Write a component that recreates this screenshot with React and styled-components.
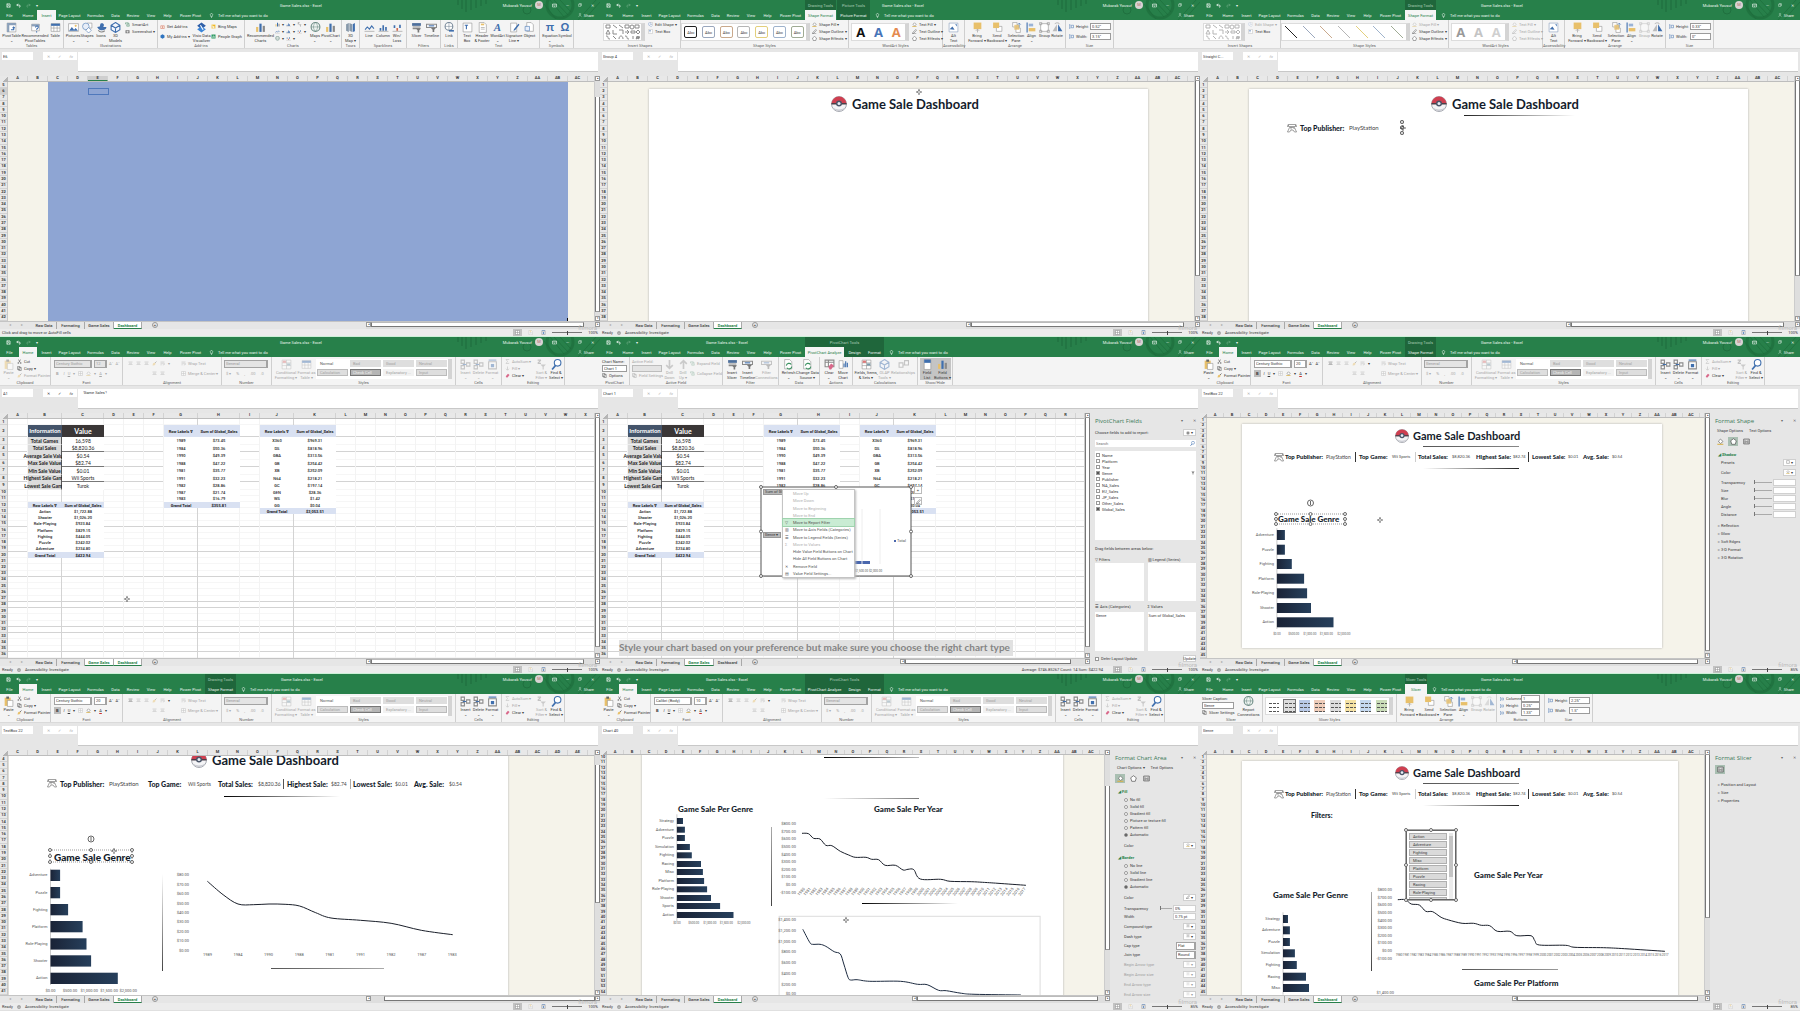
import React from "react";
import styled, { createGlobalStyle, css } from "styled-components";

const Global = createGlobalStyle`
  *, *::before, *::after { box-sizing: border-box; }
  body { margin: 0; background: #e6e6e6; font-family: Roboto, "Liberation Sans", sans-serif; }
  button, input, select { font: inherit; color: inherit; margin: 0; padding: 0; border: 0; background: none; border-radius: 0; min-width: 0; }
  table { border-spacing: 0; }
`;

const green = "#27804a";
const darkGreen = "#1f663b";
const ink = "#3a3a3a";
const blue = "#3f6fae";
const gold = "#e8c06a";

/* ---------- window frame ---------- */
const Wall = styled.main`
  display: grid;
  grid-template-columns: repeat(3, minmax(0, 1fr));
  grid-template-rows: repeat(3, minmax(0, 1fr));
  height: 100vh;
`;
const Window = styled.section`
  display: flex;
  flex-direction: column;
  overflow: hidden;
  min-width: 0;
  min-height: 0;
  background: #e6e6e6;
  color: ${ink};
  font-size: 4px;
  line-height: 5px;
  white-space: nowrap;
`;
const Header = styled.header`
  position: relative;
  display: flex;
  height: 20px;
  flex: none;
  background: ${green};
  color: #eaf5ee;
`;
const Decor = styled.svg`
  position: absolute;
  right: 0;
  top: 0;
  width: 150px;
  height: 20px;
`;
const HeadBlock = styled.div`
  position: relative;
  display: flex;
  flex-direction: column;
  flex: ${(p) => (p.$grow ? "1 1 0" : "none")};
  min-width: 0;
  background: ${(p) => (p.$ctx ? darkGreen : "transparent")};
  border-right: ${(p) => (p.$ctx ? "1px solid #27804a" : "0")};
`;
const HeadRow = styled.div`
  display: flex;
  align-items: center;
  height: 10px;
  justify-content: ${(p) => (p.$center ? "center" : "flex-start")};
  color: ${(p) => (p.$soft ? "#a9cdb6" : "inherit")};
`;
const Quick = styled.div`
  display: flex;
  align-items: center;
  gap: 5px;
  padding-left: 6px;
  width: 106px;
`;
const TitleText = styled.h2`
  margin: 0;
  font-size: 4px;
  font-weight: 400;
  flex: none;
  padding-left: ${(p) => p.$pad || 0}px;
`;
const Push = styled.span`
  margin-left: auto;
  display: flex;
  align-items: center;
  gap: ${(p) => (p.$gap === undefined ? 2 : p.$gap)}px;
  padding-right: 6px;
`;
const User = styled.span`
  display: flex;
  align-items: center;
  gap: 3px;
`;
const Avatar = styled.span`
  width: 8px;
  height: 8px;
  border-radius: 50%;
  background: #d9d3d3;
  color: #b26a6a;
  text-align: center;
  line-height: 8px;
`;
const Tab = styled.button`
  width: ${(p) => p.$w}px;
  height: 10px;
  flex: none;
  text-align: center;
  ${(p) => p.$on && css`background: #f5f5f5; color: ${green};`}
`;
const Hint = styled.span`
  display: flex;
  align-items: center;
  gap: 4px;
  padding-left: 4px;
`;

const baseTabs = [["File", 19], ["Home", 18], ["Insert", 19], ["Page Layout", 27], ["Formulas", 25], ["Data", 15], ["Review", 20], ["View", 16], ["Help", 17], ["Power Pivot", 29]];

function TitleBar({ active, ctx = [], early }) {
  const used = 205 + ctx.reduce((s, c) => s + c.tabs.reduce((a, t) => a + t[1], 0), 0);
  return (
    <Header>
      <Decor viewBox="0 0 150 20" fill="none" stroke="#1d6a3b" strokeWidth="1">
        <path d="M8 0v5M12 0v9M16 0v12M21 0v10M26 0v8M31 0v6M36 0v4" strokeWidth="2" opacity=".5" />
        <circle cx="77" cy="10" r="4" opacity=".7" />
        <circle cx="110" cy="5" r="13" strokeWidth="3" opacity=".6" />
        <path d="M100 0l14 17M104 0l14 15M110 0l11 12M94 4l12 15M128 20l18-20M134 20l16-18" opacity=".6" />
      </Decor>
      <HeadBlock>
        <HeadRow>
          <Quick>
            <Icon k="save" s={5} /><Icon k="undo" s={5} /><Icon k="redo" s={5} /><span>▾</span>
          </Quick>
          {early && <TitleText>Game Sales.xlsx - Excel</TitleText>}
        </HeadRow>
        <HeadRow as="nav">
          {baseTabs.map(([t, w]) => <Tab key={t} $w={w} $on={t === active}>{t}</Tab>)}
        </HeadRow>
      </HeadBlock>
      {ctx.map((c) => (
        <HeadBlock key={c.name} $ctx>
          <HeadRow $center $soft>{c.name}</HeadRow>
          <HeadRow>{c.tabs.map(([t, w]) => <Tab key={t} $w={w} $on={t === active}>{t}</Tab>)}</HeadRow>
        </HeadBlock>
      ))}
      <HeadBlock $grow>
        <HeadRow>
          {!early && <TitleText $pad={280 - used}>Game Sales.xlsx - Excel</TitleText>}
          <Push $gap={9}>
            <User>Mubarak Yousuf<Avatar>M</Avatar></User>
            <Icon k="display" s={5} /><span>—</span><Icon k="square" s={4} /><span>✕</span>
          </Push>
        </HeadRow>
        <HeadRow>
          <Hint><Icon k="bulb" s={5} />Tell me what you want to do</Hint>
          <Push><Icon k="person" s={4} />Share</Push>
        </HeadRow>
      </HeadBlock>
    </Header>
  );
}

/* ---------- icons ---------- */
const Svg = styled.svg`
  width: ${(p) => p.$s}px;
  height: ${(p) => p.$s}px;
  flex: none;
  opacity: ${(p) => (p.$dim ? 0.45 : 1)};
`;
const G = "#8a8a8a";
const glyphs = {
  save: <path d="M3 3h12l2 2v12H3zM6 3v5h7V3M6 17v-6h8v6" fill="none" stroke="#fff" strokeWidth="2" />,
  undo: <path d="M8 3L3 8l5 5M3 8h9a4 4 0 010 9" fill="none" stroke="#fff" strokeWidth="3" />,
  redo: <path d="M12 3l5 5-5 5M17 8H8a4 4 0 000 9" fill="none" stroke="#7db492" strokeWidth="2" />,
  display: <path d="M2 4h16v12H2zM2 8h16M10 15v-4" fill="none" stroke="#fff" strokeWidth="2" />,
  square: <path d="M3 6h11v11H3zM7 6V3h10v10h-3" fill="none" stroke="#fff" strokeWidth="2" />,
  box: <path d="M3 3h14v14H3z" fill="#fff" stroke="#666" strokeWidth="2" />,
  bulb: <path d="M10 2a5 5 0 013 9v3H7v-3a5 5 0 013-9zM8 18h4" fill="none" stroke="#fff" strokeWidth="2" />,
  person: <path d="M10 9a4 4 0 100-8 4 4 0 000 8zM3 19c0-9 14-9 14 0" fill="none" stroke="#cfe6d8" strokeWidth="2" />,
  table: <><path d="M2 3h16v14H2z" fill="#fff" stroke={G} /><path d="M2 3h16v4H2z" fill={blue} /><path d="M2 11h16M7 7v10M13 7v10" stroke={G} /></>,
  pivot: <><path d="M2 2h16v16H2z" fill="#fff" stroke={G} /><path d="M2 2h16v4H2zM2 2h4v16H2z" fill="#8ba0ba" /><path d="M9 14h5V9M12 11l2-2 2 2" stroke={blue} fill="none" strokeWidth="2" /></>,
  recpivot: <><path d="M3 4h14v12H3z" fill="#fff" stroke={G} /><path d="M3 4h14v4H3z" fill="#8ba0ba" /><path d="M10 10c0-4 6-3 5 0-1 2-3 2-3 4M12 17v2" stroke={blue} fill="none" strokeWidth="2" /></>,
  picture: <><path d="M1 3h18v14H1z" fill="#fff" stroke={G} /><path d="M2 16l5-7 4 5 3-3 4 5z" fill={blue} /><circle cx="14" cy="7" r="2" fill={gold} /></>,
  shapes: <><path d="M9 2h9v9H9z" fill="#fff" stroke={G} /><circle cx="7" cy="8" r="6" fill="#e8eef8" stroke={blue} /><path d="M12 10l5 5-5 5-5-5z" fill="#fff" stroke={blue} /></>,
  duck: <><path d="M8 3c6-3 8 3 5 6h6c0 6-10 8-14 4l-3-4 5-1z" fill={blue} /><path d="M4 15c3 4 8 4 12 1" stroke={G} fill="none" strokeWidth="2" /></>,
  cube: <path d="M10 1l8 5v8l-8 5-8-5V6zM2 6l8 5 8-5M10 11v8" fill="#f4f8ff" stroke={blue} strokeWidth="2" />,
  smart: <path d="M2 3h10v5H2zM7 12h10v5H7zM12 5h4v7" fill="#fff" stroke="#4c8b69" strokeWidth="2" />,
  shot: <><path d="M2 5h16v12H2z" fill="#777" /><circle cx="10" cy="11" r="4" fill="#ddd" /></>,
  store: <><path d="M3 7h14v11H3z" fill="#fff" stroke="#d2684d" strokeWidth="2" /><path d="M10 9v7M7 12h7" stroke="#d2684d" strokeWidth="2" /></>,
  hex: <path d="M10 1l8 5v8l-8 5-8-5V6z" fill="#2f74c0" />,
  visio: <><path d="M10 1l8 6-8 6-8-6z" fill="#2e5fa8" /><path d="M10 8l8 5-8 6-8-6z" fill="#3c86d8" /><path d="M8 6l5 8" stroke="#fff" strokeWidth="2" /></>,
  bing: <path d="M2 2h16v16H2zM6 5v9l4 2 5-4-5-3" fill="#efb71f" stroke="#fff" />,
  people: <><path d="M2 2h16v16H2z" fill="#2f9a63" /><path d="M6 15v-5M10 15V6M14 15V9" stroke="#fff" strokeWidth="2" /></>,
  chart: <><path d="M2 9h4v9H2z" fill={gold} /><path d="M8 3h4v15H8z" fill={blue} /><path d="M14 7h4v11h-4z" fill="#8a8a8a" /></>,
  globe: <><circle cx="10" cy="9" r="8" fill="#eef4f1" stroke="#6d8c85" strokeWidth="2" /><path d="M2 9h16M10 1c-5 5-5 11 0 16M10 1c5 5 5 11 0 16" stroke="#6d8c85" fill="none" /></>,
  map3d: <><path d="M2 4l5-2v16l-5-2zM8 2l5 2v14l-5-2z" fill="#89a" /><path d="M14 4l4-2v15l-4 1z" fill={blue} /></>,
  spark: <><path d="M2 14l4-5 4 4 4-6 4 5" stroke={blue} fill="none" strokeWidth="2" /><path d="M1 17h18" stroke={G} /></>,
  bars: <><path d="M3 11h3v5H3zM8 6h3v10H8zM13 9h3v7h-3z" fill={blue} /><path d="M1 17h18" stroke={G} /></>,
  winloss: <><path d="M3 6h3v5H3zM13 5h3v6h-3z" fill={blue} /><path d="M8 11h3v5H8z" fill="#d2684d" /><path d="M1 17h18" stroke={G} /></>,
  slicer: <><path d="M2 2h16v5H2z" fill="#4d6f9b" /><path d="M3 9h14M3 12h14" stroke={G} strokeWidth="2" /><path d="M9 12h9l-3 3v4h-3v-4z" fill="#777" /></>,
  timeline: <><path d="M1 4h18v6H1z" fill="#fff" stroke={G} strokeWidth="2" /><path d="M5 7h10" stroke={blue} strokeWidth="2" /><path d="M9 11h9l-3 3v4h-3v-4z" fill="#777" /></>,
  textbox: <><path d="M2 2h16v16H2z" fill="#fff" stroke={G} /><path d="M5 6h6M8 6v7" stroke={blue} strokeWidth="2" /></>,
  doc: <><path d="M4 1h9l4 4v14H4z" fill="#fff" stroke={G} /><path d="M7 3h6v3H7z" fill={gold} /><path d="M7 10h7M7 13h7" stroke={G} /></>,
  sign: <><path d="M3 2h11v16H3z" fill="#fff" stroke={G} /><path d="M17 3l-8 10-1 3 3-1 8-10z" fill={blue} /></>,
  object: <><path d="M5 1h8l4 4v12H5z" fill="#fff" stroke={G} /><path d="M2 8h8v8H2z" fill="#e7eefb" stroke={blue} /></>,
  alt: <><path d="M2 2h16v16H2z" fill="#fff" stroke="#7d95b5" /><path d="M3 13l5-5 4 6zM13 4h3v4" fill={blue} /></>,
  fwd: <><path d="M3 1h14v12H3z" fill={gold} /><path d="M10 19v-5M7 16l3-3 3 3" stroke={G} fill="none" /></>,
  back: <><path d="M8 8h10v9H8z" fill="#fff" stroke={G} /><path d="M2 1h11v10H2z" fill={gold} /></>,
  panes: <><path d="M3 1h8v8H3zM9 11h8v8H9z" fill="#fff" stroke={G} /><path d="M6 5h9v9H6z" fill={gold} opacity=".8" /><path d="M15 2v8M12 5l3-3 3 3" stroke={blue} fill="none" /></>,
  align: <><path d="M2 1v18" stroke={blue} strokeWidth="2" /><path d="M5 3h8v5H5z" fill="#9ab3d6" /><path d="M5 11h12v6H5z" fill={gold} /></>,
  group: <path d="M3 3h14v14H3zM1 1h4v4H1zM15 1h4v4h-4zM15 15h4v4h-4zM1 15h4v4H1z" fill="#fff" stroke={G} />,
  rotate: <><path d="M9 4v13H1z" fill="#bbb" /><path d="M11 17V4l8 13z" fill={blue} /><path d="M5 3c5-3 8-1 9 1" stroke={G} fill="none" /></>,
  paste: <><path d="M3 3h11v15H3z" fill={gold} /><path d="M6 1h5v4H6z" fill="#666" /><path d="M8 8h10v11H8z" fill="#fff" stroke={G} /></>,
  cut: <path d="M6 2l6 11M14 2L8 13M5 18a2 2 0 110-4 2 2 0 010 4zM15 18a2 2 0 110-4 2 2 0 010 4z" stroke="#444" fill="none" strokeWidth="2" />,
  copy: <path d="M2 2h10v12H2zM7 6h10v12H7z" fill="#fff" stroke="#555" strokeWidth="2" />,
  brush: <><path d="M12 8l6-6" stroke="#555" strokeWidth="3" /><path d="M4 10l6-4 5 5-5 6-8 1z" fill={gold} /></>,
  lines: <path d="M2 4h16M4 9h12M2 14h16" stroke="#777" strokeWidth="2" />,
  wrap: <path d="M2 4h16M2 9h13a3 3 0 010 6h-4M2 15h5" stroke="#777" strokeWidth="2" fill="none" />,
  cell: <path d="M2 2h16v16H2zM2 10h16M10 2v16" fill="#fff" stroke={G} strokeWidth="2" />,
  cond: <><path d="M2 2h16v16H2zM2 7h16M2 12h16M10 2v16" fill="#fff" stroke={G} /><path d="M3 3h6v4H3z" fill="#d77" /><path d="M11 8h6v4h-6z" fill="#79a" /></>,
  bucket: <><path d="M4 9l6-6 7 7-7 6z" fill="#fff" stroke="#666" strokeWidth="2" /><path d="M1 18h17" stroke="#d9b24a" strokeWidth="3" /></>,
  sum: <path d="M15 4V2H4l6 8-6 8h11v-3" stroke="#777" fill="none" strokeWidth="2" />,
  down: <path d="M10 2v14M4 11l6 6 6-6" stroke="#999" fill="none" strokeWidth="3" />,
  up: <path d="M10 18V4M4 9l6-6 6 6" stroke="#999" fill="none" strokeWidth="3" />,
  eraser: <path d="M3 13L12 3l6 5-8 10H6z" fill="#d9688a" />,
  clear: <><path d="M2 2h16v12H2zM2 6h16M8 2v12" fill="#fff" stroke={G} strokeWidth="2" /><path d="M8 14l5-6 5 4-5 7h-3z" fill="#d9688a" /></>,
  sort: <><path d="M3 2h6M3 8h6M9 2L3 8" stroke="#888" fill="none" strokeWidth="2" /><path d="M8 10h10l-4 4v5h-2v-5z" fill="#999" /></>,
  find: <><circle cx="12" cy="7" r="6" fill="#fff" stroke={blue} strokeWidth="2" /><path d="M8 12l-6 7" stroke={blue} strokeWidth="3" /></>,
  ins: <><path d="M2 2h6v6H2zM2 12h6v6H2zM12 7h6v6h-6z" fill="#fff" stroke={G} strokeWidth="2" /><path d="M11 10H5" stroke={blue} strokeWidth="2" /></>,
  fmt: <><path d="M3 5h14v13H3z" fill="#fff" stroke={G} strokeWidth="2" /><path d="M7 9h6v6H7z" fill={blue} /><path d="M3 2h14" stroke={blue} strokeWidth="2" /></>,
  refresh: <><path d="M3 1h9l4 4v13H3z" fill="#fff" stroke={G} /><path d="M6 12a5 5 0 019-2M16 14a5 5 0 01-9 2" stroke="#3a9160" fill="none" strokeWidth="2" /></>,
  move: <><path d="M2 3h7v14H2z" fill="#fff" stroke={G} /><path d="M11 15V8M14 15V4M17 15V7" stroke={blue} strokeWidth="2" /></>,
  rel: <path d="M2 7h7v8H2zM12 3h7v8h-7zM9 11h3" fill="#fff" stroke={G} strokeWidth="2" />,
  list: <><path d="M4 1h12v18H4z" fill="#fff" stroke={G} /><path d="M4 1h12v6H4z" fill={blue} /></>,
  hv: <path d="M3 3v14M1 5l2-3 2 3M1 15l2 3 2-3M9 5h9v10H9z" fill="none" stroke={blue} strokeWidth="2" />,
  pent: <path d="M10 2l8 6-3 10H5L2 8z" fill="#fff" stroke="#555" strokeWidth="2" />,
  sizep: <path d="M2 3h16v14H2zM6 7v8M14 7v8M8 11h4" fill="#ddd" stroke="#555" strokeWidth="2" />,
  link: <><circle cx="9" cy="8" r="7" fill="#fff" stroke="#789" strokeWidth="2" /><path d="M2 8h14M9 1v14" stroke="#789" /><path d="M9 16h9" stroke={blue} strokeWidth="3" /></>,
  funnel: <path d="M2 3h16l-6 7v8H8v-8z" fill="#777" />,
  gear: <path d="M10 4a6 6 0 100 12 6 6 0 000-12zM10 1v18M1 10h18M4 4l12 12M16 4L4 16" fill="#ddd" stroke="#777" strokeWidth="2" />,
  pen: <path d="M15 2l3 3L7 17l-5 1 2-5zM2 19h15" fill="#fff" stroke="#555" strokeWidth="2" />,
  access: <><circle cx="10" cy="10" r="8" fill="none" stroke="#555" strokeWidth="2" /><path d="M5 8h10M10 8v4M7 16l3-4 3 4" stroke="#555" strokeWidth="2" fill="none" /></>,
};
function Icon({ k, s = 10, dim }) {
  return <Svg $s={s} $dim={dim} viewBox="0 0 20 20" aria-hidden="true">{glyphs[k]}</Svg>;
}

/* ---------- ribbon ---------- */
const Ribbon = styled.div`
  display: flex;
  flex: none;
  height: 29px;
  background: #f4f4f4;
  border-bottom: 1px solid #dadada;
`;
const GroupBox = styled.div`
  display: flex;
  flex-direction: column;
  flex: none;
  width: ${(p) => p.$w}px;
  border-right: 1px solid #cfcfcf;
  padding-top: 1px;
`;
const GroupBody = styled.div`
  display: flex;
  height: 22px;
  padding-left: ${(p) => p.$pad || 0}px;
`;
const GroupName = styled.div`
  text-align: center;
  color: #5d5d5d;
`;
function Group({ w, name, pad, children }) {
  return <GroupBox $w={w}><GroupBody $pad={pad}>{children}</GroupBody><GroupName>{name}</GroupName></GroupBox>;
}
const BigButton = styled.button`
  display: flex;
  flex-direction: column;
  align-items: center;
  flex: none;
  width: ${(p) => p.$w}px;
  height: 22px;
  padding-top: 1px;
  text-align: center;
  white-space: pre;
  line-height: 5px;
  color: ${(p) => (p.$dim ? "#a8a8a8" : ink)};
  background: ${(p) => (p.$on ? "#c4c4c4" : "none")};
`;
const Glyph = styled.span`
  height: 11px;
  font: ${(p) => (p.$serif ? "italic 700 11px 'Liberation Serif', serif" : "700 11px 'Liberation Sans', sans-serif")};
  line-height: 10px;
  color: ${blue};
`;
function Big({ w, icon, text, dim, on, glyph }) {
  return <BigButton $w={w} $dim={dim} $on={on}>{glyph ? <Glyph $serif={glyph === "A"}>{glyph}</Glyph> : <Icon k={icon} s={11} dim={dim} />}{text}</BigButton>;
}
const Stack = styled.div`
  display: flex;
  flex-direction: column;
  flex: none;
  width: ${(p) => p.$w}px;
  height: 21px;
  padding-left: ${(p) => p.$pad || 0}px;
  justify-content: ${(p) => (p.$two ? "space-evenly" : "flex-start")};
`;
const SmallButton = styled.button`
  display: flex;
  align-items: center;
  gap: 2px;
  height: 7px;
  color: ${(p) => (p.$dim ? "#a8a8a8" : ink)};
`;
function Small({ icon, text, dim }) {
  return <SmallButton $dim={dim}>{icon && <Icon k={icon} s={5} dim={dim} />}{text}</SmallButton>;
}
const Field = styled.input`
  width: ${(p) => p.$w}px;
  height: 7px;
  flex: none;
  border: 1px solid ${(p) => (p.disabled ? "#bdbdbd" : "#9b9b9b")};
  background: ${(p) => (p.disabled ? "#e4e4e4" : "#fff")};
  padding-left: 1px;
  font-size: 4px;
`;
const Pick = styled.select`
  appearance: none;
  width: ${(p) => p.$w}px;
  height: 8px;
  flex: none;
  border: 1px solid #a3a3a3;
  border-right-width: 2px;
  background: ${(p) => (p.disabled ? "#e4e4e4" : "#fff")};
  padding-left: 1px;
  line-height: 5px;
  font-size: 4px;
  color: ${(p) => (p.disabled ? "#999" : ink)};
  opacity: 1;
`;
const FieldRow = styled.label`
  display: flex;
  align-items: center;
  height: 7px;
  gap: 2px;
  span { width: ${(p) => p.$lab || 12}px; }
`;
const Gallery = styled.div`
  display: grid;
  grid-template-columns: repeat(${(p) => p.$n}, 1fr);
  align-items: center;
  justify-items: center;
  flex: none;
  width: ${(p) => p.$w}px;
  height: 18px;
  margin-top: 2px;
  background: #fff;
  border: 1px solid #dcdcdc;
  border-right: 4px solid #d4d4d4;
`;
const Swatch = styled.button`
  width: 13px;
  height: 12px;
  border: 1px solid ${(p) => p.$c};
  border-radius: 2px;
  line-height: 5px;
`;
const Letter = styled.button`
  font: 700 13px/14px "Open Sans", sans-serif;
  color: ${(p) => p.$c};
`;
const ShapeSvg = styled.svg`width: 36px; height: 16px;`;
const ShapeBits = ({ dim }) => (
  <Gallery $n={1} $w={42}>
    <ShapeSvg viewBox="0 0 36 16" fill="none" stroke={dim ? "#b5b5b5" : "#8a8a8a"} strokeWidth="1">
      <path d="M1 1h4v3H1zM8 1l4 3M14 1l4 3M20 1h4v3h-4zM30 1h4v3h-4zM3 6l2 4H1zM8 6v4h4M14 6h4v4M20 8h4l-2-2 2 2-2 2M26 7h4v2h-4zM31 8l2-2 2 2-2 2zM1 12c4 0 0 3 4 3M8 12l3 3M14 15c0-4 4-4 4 0M20 12c4 0 0 3 4 3M28 12v3M31 15l2-3 1 3-3-2h4z" />
      <circle cx="27" cy="3" r="2" />
    </ShapeSvg>
  </Gallery>
);

const InsertRibbon = () => (
  <>
    <Group w={64} name="Tables">
      <Big w={23} icon="pivot" text={"PivotTable\n⌄"} /><Big w={24} icon="recpivot" text={"Recommended\nPivotTables"} /><Big w={16} icon="table" text="Table" />
    </Group>
    <Group w={94} name="Illustrations" pad={2}>
      <Big w={14} icon="picture" text={"Pictures\n⌄"} /><Big w={14} icon="shapes" text={"Shapes\n⌄"} /><Big w={14} icon="duck" text="Icons" /><Big w={15} icon="cube" text={"3D\nModels"} />
      <Stack $w={32} $pad={2}><Small icon="smart" text="SmartArt" /><Small icon="shot" text="Screenshot ▾" /></Stack>
    </Group>
    <Group w={87} name="Add-ins" pad={2}>
      <Stack $w={32} $two><Small icon="store" text="Get Add-ins" /><Small icon="hex" text="My Add-ins ▾" /></Stack>
      <Big w={19} icon="visio" text={"Visio Data\nVisualizer"} />
      <Stack $w={32} $two><Small icon="bing" text="Bing Maps" /><Small icon="people" text="People Graph" /></Stack>
    </Group>
    <Group w={97} name="Charts" pad={2}>
      <Big w={27} icon="chart" text={"Recommended\nCharts"} />
      <Stack $w={12} $pad={1}><Small icon="chart" text="▾" /><Small icon="spark" text="▾" /><Small icon="globe" text="▾" /></Stack>
      <Stack $w={11}><Small icon="bars" text="▾" /><Small icon="bars" text="▾" /><Small icon="winloss" text="▾" /></Stack>
      <Stack $w={11}><Small icon="sort" text="▾" /><Small icon="winloss" text="▾" /></Stack>
      <Big w={14} icon="globe" text={"Maps\n⌄"} /><Big w={17} icon="chart" text={"PivotChart\n⌄"} />
    </Group>
    <Group w={18} name="Tours"><Big w={17} icon="map3d" text={"3D\nMap ▾"} /></Group>
    <Group w={47} name="Sparklines" pad={2}><Big w={14} icon="spark" text="Line" /><Big w={14} icon="bars" text="Column" /><Big w={14} icon="winloss" text={"Win/\nLoss"} /></Group>
    <Group w={34} name="Filters" pad={2}><Big w={15} icon="slicer" text="Slicer" /><Big w={15} icon="timeline" text="Timeline" /></Group>
    <Group w={17} name="Links"><Big w={16} icon="link" text="Link" /></Group>
    <Group w={82} name="Text" pad={2}>
      <Big w={14} icon="textbox" text={"Text\nBox"} /><Big w={16} icon="doc" text={"Header\n& Footer"} /><Big w={15} glyph="A" text={"WordArt\n⌄"} /><Big w={18} icon="sign" text={"Signature\nLine ▾"} /><Big w={13} icon="object" text="Object" />
    </Group>
    <Group w={34} name="Symbols" pad={2}><Big w={16} glyph="π" text={"Equation\n⌄"} /><Big w={14} glyph="Ω" text="Symbol" /></Group>
  </>
);
const ArrangeGroup = ({ dim, w = 101 }) => (
  <Group w={w} name="Arrange" pad={2}>
    <Big w={20} icon="fwd" text={"Bring\nForward ▾"} /><Big w={20} icon="back" text={"Send\nBackward ▾"} /><Big w={18} icon="panes" text={"Selection\nPane"} /><Big w={13} icon="align" text={"Align\n⌄"} /><Big w={13} icon="group" text="Group" dim={dim} /><Big w={12} icon="rotate" text="Rotate" dim={dim && w < 101} />
  </Group>
);
const SizeGroup = ({ h, v }) => (
  <Group w={48} name="Size" pad={3}>
    <Stack $w={44} $two>
      <FieldRow><Icon k="hv" s={5} /><span>Height:</span><Field $w={21} defaultValue={h} /></FieldRow>
      <FieldRow><Icon k="hv" s={5} /><span>Width:</span><Field $w={21} defaultValue={v} /></FieldRow>
    </Stack>
  </Group>
);
const ShapeRibbon = ({ line }) => {
  const colors = ["#222", "#9aa7bd", "#c9a98c", "#b5b5b5", "#e3cf7c", "#9fb3cc", "#9fab94"];
  return (
    <>
      <Group w={81} name="Insert Shapes" pad={3}>
        <ShapeBits dim={line} />
        <Stack $w={32} $pad={3}><Small icon="shapes" text="Edit Shape ▾" dim={line} /><Small icon="textbox" text="Text Box" /></Stack>
      </Group>
      <Group w={168} name="Shape Styles">
        <Gallery $n={7} $w={129}>
          {colors.map((c) => line
            ? <Svg key={c} $s={12} viewBox="0 0 12 12"><path d="M0 0l12 12" stroke={c} /></Svg>
            : <Swatch key={c} $c={c}>Abc</Swatch>)}
        </Gallery>
        <Stack $w={36} $pad={2}><Small icon="bucket" text="Shape Fill ▾" dim={line} /><Small icon="pen" text="Shape Outline ▾" /><Small icon="pent" text="Shape Effects ▾" /></Stack>
      </Group>
      <Group w={94} name="WordArt Styles" pad={2}>
        <Gallery $n={3} $w={58}>
          <Letter $c={line ? "#999" : "#111"}>A</Letter><Letter $c={line ? "#c4c4c4" : "#4774b8"}>A</Letter><Letter $c={line ? "#d0d0d0" : "#e58b51"}>A</Letter>
        </Gallery>
        <Stack $w={32} $pad={3}><Small icon="bucket" text="Text Fill ▾" dim={line} /><Small icon="pen" text="Text Outline ▾" dim={line} /><Small icon="pent" text="Text Effects ▾" dim={line} /></Stack>
      </Group>
      <Group w={22} name="Accessibility"><Big w={21} icon="alt" text={"Alt\nText"} /></Group>
      <ArrangeGroup dim={line} />
      <SizeGroup h={line ? "0.33\"" : "0.52\""} v={line ? "0\"" : "3.15\""} />
    </>
  );
};
const IconRow = styled.div`
  display: flex;
  align-items: center;
  gap: ${(p) => p.$gap || 3}px;
  height: 8px;
  padding-left: ${(p) => p.$pad || 0}px;
  color: ${(p) => (p.$dim ? "#aaa" : ink)};
`;
const StyleGrid = styled.div`
  display: grid;
  grid-template-columns: repeat(4, 31px);
  grid-auto-rows: 7px;
  gap: 2px 2px;
  padding: 1px;
  margin-top: 1px;
  height: 20px;
  background: #fff;
  border-right: 4px solid #d4d4d4;
`;
const StyleCell = styled.button`
  text-align: left;
  padding-left: 2px;
  color: ${(p) => (p.$c ? p.$c : "#a2a2a2")};
  background: ${(p) => p.$bg || "#dedede"};
  border: 1px solid ${(p) => p.$bd || "#dedede"};
  line-height: 5px;
`;
const Pressed = styled.button`
  height: 7px;
  padding: 0 2px;
  background: ${(p) => (p.$on ? "#bdbdbd" : "none")};
  font-weight: 700;
`;
const FontColor = styled.u`
  text-decoration-color: ${(p) => (p.$off ? "#aaa" : "#c33")};
`;
const HomeRibbon = ({ off, font = "Century Gothic", size = "20" }) => (
  <>
    <Group w={51} name="Clipboard">
      <Big w={17} icon="paste" text={"Paste\n⌄"} dim={off} />
      <Stack $w={33}><Small icon="cut" text="Cut" /><Small icon="copy" text="Copy ▾" /><Small icon="brush" text="Format Painter" dim={off} /></Stack>
    </Group>
    <Group w={72} name="Font" pad={3}>
      <Stack $w={68} $two>
        <IconRow $dim={off} $gap={2}><Pick $w={38} disabled={off} aria-label="Font"><option>{font}</option></Pick><Pick $w={13} disabled={off} aria-label="Font size"><option>{size}</option></Pick><span>Aˆ</span><span>Aˇ</span></IconRow>
        <IconRow $dim={off}><Pressed $on={!off && size === "20"}>B</Pressed><i>I</i><u>U</u>▾<Icon k="cell" s={5} dim /><Icon k="bucket" s={5} dim={off} />▾<FontColor $off={off}>A</FontColor>▾</IconRow>
      </Stack>
    </Group>
    <Group w={99} name="Alignment" pad={5}>
      <Stack $w={53} $two>
        <IconRow $dim={off}><Icon k="lines" s={5} dim={off} /><Icon k="lines" s={5} dim /><Icon k="lines" s={5} dim /><Icon k="brush" s={5} dim /><Icon k="wrap" s={5} dim />▾</IconRow>
        <IconRow $pad={24}><Icon k="lines" s={5} dim /><Icon k="lines" s={5} dim /></IconRow>
      </Stack>
      <Stack $w={38} $two><Small icon="wrap" text="Wrap Text" dim /><Small icon="cell" text="Merge & Center ▾" dim /></Stack>
    </Group>
    <Group w={50} name="Number" pad={2}>
      <Stack $w={46} $two>
        <Pick $w={44} disabled aria-label="Number format"><option>General</option></Pick>
        <IconRow $dim $gap={5} $pad={2}><span>$ ▾</span><span>%</span><span>,</span><span>.00</span><span>.0</span></IconRow>
      </Stack>
    </Group>
    <Group w={184} name="Styles" pad={3}>
      <Big w={22} icon="cond" text={"Conditional\nFormatting ▾"} dim /><Big w={19} icon="table" text={"Format as\nTable ▾"} dim />
      <StyleGrid>
        <StyleCell $bg="#fff" $bd="#fff" $c="#555">Normal</StyleCell><StyleCell>Bad</StyleCell><StyleCell>Good</StyleCell><StyleCell>Neutral</StyleCell>
        <StyleCell $bd="#bbb">Calculation</StyleCell><StyleCell $bg="#b5b5b5" $bd="#777" $c="#f2f2f2">Check Cell</StyleCell><StyleCell $bg="#f2f2f2" $bd="#f2f2f2">Explanatory ...</StyleCell><StyleCell $bd="#bbb">Input</StyleCell>
      </StyleGrid>
    </Group>
    <Group w={46} name="Cells" pad={3}><Big w={13} icon="ins" text={"Insert\n⌄"} dim={off} /><Big w={13} icon="ins" text={"Delete\n⌄"} dim={off} /><Big w={14} icon="fmt" text={"Format\n⌄"} dim={off} /></Group>
    <Group w={63} name="Editing" pad={3}>
      <Stack $w={29}><Small icon="sum" text="AutoSum ▾" dim /><Small icon="down" text="Fill ▾" dim /><Small icon="eraser" text="Clear ▾" /></Stack>
      <Big w={15} icon="sort" text={"Sort &\nFilter ▾"} dim /><Big w={14} icon="find" text={"Find &\nSelect ▾"} />
    </Group>
  </>
);
const AnalyzeRibbon = () => (
  <>
    <Group w={30} name="PivotChart" pad={2}>
      <Stack $w={27}><Small text="Chart Name:" /><Field $w={25} defaultValue="Chart 1" aria-label="Chart name" /><Small icon="copy" text="Options" /></Stack>
    </Group>
    <Group w={93} name="Active Field" pad={2}>
      <Stack $w={31}><Small text="Active Field:" dim /><Field $w={30} disabled aria-label="Active field" /><Small icon="copy" text="Field Settings" dim /></Stack>
      <Big w={13} icon="down" text={"Drill\nDown"} dim /><Big w={14} icon="up" text={"Drill\nUp ▾"} dim />
      <Stack $w={31} $two><Small icon="smart" text="Expand Field" dim /><Small icon="smart" text="Collapse Field" dim /></Stack>
    </Group>
    <Group w={56} name="Filter" pad={2}><Big w={14} icon="slicer" text={"Insert\nSlicer"} /><Big w={17} icon="timeline" text={"Insert\nTimeline"} /><Big w={21} icon="timeline" text={"Filter\nConnections"} dim /></Group>
    <Group w={41} name="Data" pad={1}><Big w={17} icon="refresh" text={"Refresh\n⌄"} /><Big w={21} icon="refresh" text={"Change Data\nSource ▾"} /></Group>
    <Group w={33} name="Actions" pad={2}><Big w={14} icon="clear" text={"Clear\n⌄"} /><Big w={14} icon="move" text={"Move\nChart"} /></Group>
    <Group w={65} name="Calculations" pad={2}><Big w={22} icon="cond" text={"Fields, Items,\n& Sets ▾"} /><Big w={15} icon="cube" text={"OLAP\nTools ▾"} dim /><Big w={22} icon="rel" text="Relationships" dim /></Group>
    <Group w={35} name="Show/Hide" pad={2}><Big w={14} icon="list" text={"Field\nList"} on /><Big w={17} icon="chart" text={"Field\nButtons ▾"} on /></Group>
  </>
);
const MiniTable = styled.span`
  width: 13px;
  height: 14px;
  border: 1px solid ${(p) => (p.$on ? "#777" : "#fff")};
  background: repeating-linear-gradient(90deg, ${(p) => p.$bg} 0 1px, transparent 1px 4px),
    repeating-linear-gradient(180deg, ${(p) => p.$bg} 0 3px, #555 3px 4px);
`;
const SlicerRibbon = () => (
  <>
    <Group w={63} name="Slicer" pad={2}>
      <Stack $w={34}><Small text="Slicer Caption:" /><Field $w={32} defaultValue="Genre" aria-label="Slicer caption" /><Small icon="copy" text="Slicer Settings" /></Stack>
      <Big w={25} icon="globe" text={"Report\nConnections"} />
    </Group>
    <Group w={134} name="Slicer Styles" pad={2}>
      <Gallery $n={8} $w={128}>
        {["#fff", "#dcdcdc", "#b9c9e6", "#eeccb9", "#dcdcdc", "#f5e2a4", "#c4d8ee", "#c9dcb8"].map((c, i) => <MiniTable key={i} $bg={c} $on={i === 1} />)}
      </Gallery>
    </Group>
    <ArrangeGroup dim w={100} />
    <Group w={48} name="Buttons" pad={3}>
      <Stack $w={44}>
        <FieldRow $lab={13}><Icon k="hv" s={4} /><span>Columns:</span><Field $w={19} defaultValue="1" /></FieldRow>
        <FieldRow $lab={13}><Icon k="hv" s={4} /><span>Height:</span><Field $w={19} defaultValue={'0.25"'} /></FieldRow>
        <FieldRow $lab={13}><Icon k="hv" s={4} /><span>Width:</span><Field $w={19} defaultValue={'1.33"'} /></FieldRow>
      </Stack>
    </Group>
    <SizeGroup h={'2.25"'} v={'1.5"'} />
  </>
);

/* ---------- formula bar ---------- */
const FormulaBar = styled.div`
  display: flex;
  align-items: flex-start;
  flex: none;
  height: 27px;
  padding: 3px 2px 0;
`;
const NameBox = styled.input`
  width: 31px;
  height: 8px;
  background: #fff;
  padding-left: 1px;
  margin-right: 10px;
`;
const FxBox = styled.div`
  display: flex;
  justify-content: space-around;
  align-items: center;
  width: 34px;
  height: 8px;
  margin-right: 1px;
  background: #fff;
  color: ${(p) => (p.$on ? "#333" : "#aaa")};
`;
const Formula = styled.input`
  flex: 1;
  height: 20px;
  background: #fff;
  padding: 0 5px 12px;
  border-bottom: 1px solid #c8c8c8;
`;

/* ---------- sheet ---------- */
const Work = styled.div`display: flex; flex: 1; min-height: 0;`;
const Left = styled.div`display: flex; flex-direction: column; flex: 1; min-width: 0; min-height: 0;`;
const SheetArea = styled.div`display: flex; flex: 1; min-height: 0;`;
const SheetBox = styled.div`
  flex: 1;
  min-width: 0;
  min-height: 0;
  display: grid;
  grid-template-columns: ${(p) => (p.$small ? 7 : 8)}px minmax(0, 1fr);
  grid-template-rows: ${(p) => (p.$small ? 5 : 6)}px minmax(0, 1fr);
  font-weight: 700;
`;
const ColHeads = styled.div`
  display: flex;
  overflow: hidden;
  line-height: 4px;
  background: #e8e8e8;
  border-bottom: 1px solid #bdbdbd;
`;
const ColHead = styled.span`
  flex: none;
  width: ${(p) => p.$w}px;
  text-align: center;
  border-right: 1px solid #d2d2d2;
  ${(p) => p.$on && css`background: #cfcfcf; border-bottom: 1px solid ${green};`}
`;
const Corner = styled.div`background: linear-gradient(135deg, #e8e8e8 60%, #b5b5b5 60%);`;
const RowHeads = styled.div`
  display: grid;
  grid-template-rows: ${(p) => p.$rows};
  overflow: hidden;
  line-height: 4px;
  background: #e8e8e8;
  border-right: 1px solid #c8c8c8;
`;
const RowHead = styled.span`
  display: flex;
  align-items: center;
  justify-content: center;
  min-height: 0;
  border-bottom: 1px solid #d2d2d2;
  background: ${(p) => (p.$on ? "#cfcfcf" : "none")};
`;
const Canvas = styled.div`
  position: relative;
  overflow: hidden;
  background: ${(p) => p.$bg || "#f5f3ea"};
  font-weight: 400;
`;
const VBar = styled.div`
  flex: none;
  display: flex;
  flex-direction: column;
  width: 6px;
  border-left: 1px solid #ccc;
  background: #dedede;
`;
const VArrow = styled.button`height: 5px; width: 5px; background: #fff; border: 1px solid #999; font-size: 3px; line-height: 3px;`;
const Gap = styled.span`flex: ${(p) => p.$f} 0 0;`;
const Thumb = styled.span`flex: ${(p) => p.$f} 0 0; background: #fff; border-right: 1px solid #777; border-left: 1px solid #777; border-bottom: 1px solid #999;`;

const letters = (from, n) => Array.from({ length: n }, (_, i) => {
  const k = from + i;
  return k < 26 ? String.fromCharCode(65 + k) : "A" + String.fromCharCode(65 + k - 26);
});

function Sheet({ small, first = 0, row0 = 1, rows = 38, colW, rowTpl, bg, bar, selCol, selRow, children }) {
  const w = small ? 17 : 20;
  return (
    <SheetArea>
      <SheetBox $small={small}>
        <Corner />
        <ColHeads>{letters(first, colW ? colW.length : 29).map((c, i) => <ColHead key={c} $w={colW ? colW[i] : w} $on={c === selCol}>{c}</ColHead>)}</ColHeads>
        <RowHeads $rows={rowTpl || `repeat(${rows}, minmax(0, 1fr))`}>
          {Array.from({ length: rows }, (_, i) => <RowHead key={i} $on={row0 + i === selRow}>{row0 + i}</RowHead>)}
        </RowHeads>
        <Canvas $bg={bg}>{children}</Canvas>
      </SheetBox>
      <VBar><VArrow aria-label="Scroll up">▴</VArrow><Gap $f={bar[0]} /><Thumb $f={bar[1]} /><Gap $f={bar[2]} /><VArrow aria-label="Scroll down">▾</VArrow></VBar>
    </SheetArea>
  );
}

const TabStrip = styled.div`
  display: flex;
  flex: none;
  height: 8px;
  background: #e6e6e6;
  border-top: 1px solid #c4c4c4;
`;
const Nav = styled.span`width: 32px; color: #aaa; display: flex; justify-content: space-evenly;`;
const SheetTab = styled.button`
  width: ${(p) => p.$w}px;
  border-right: 1px solid #a9a9a9;
  color: ${(p) => (p.$on ? green : ink)};
  font-weight: ${(p) => (p.$on ? 700 : 500)};
  background: ${(p) => (p.$on ? "#fff" : "none")};
  border-bottom: ${(p) => (p.$on ? `1px solid ${green}` : "0")};
`;
const HBar = styled.div`
  display: flex;
  margin-left: auto;
  width: ${(p) => p.$w}px;
  background: #dedede;
`;
const HThumb = styled.span`flex: ${(p) => p.$f} 0 0; height: 5px; background: #fff; border: 1px solid #777; border-top-color: #bbb;`;
const Plus = styled.button`width: 6px; height: 6px; margin-left: 10px; border: 1px solid #999; border-radius: 50%; line-height: 3px;`;
function Tabs({ on = ["Dashboard"], hw = 234, h = [0, 95, 5] }) {
  return (
    <TabStrip>
      <Nav><span>◂</span><span>▸</span></Nav>
      {[["Raw Data", 25], ["Formating", 28], ["Game Sales", 29], ["Dashboard", 28]].map(([t, w]) => <SheetTab key={t} $w={w} $on={on.includes(t)}>{t}</SheetTab>)}
      <Plus aria-label="New sheet">+</Plus>
      <HBar $w={hw}><VArrow aria-label="Scroll left">◂</VArrow><Gap $f={h[0]} /><HThumb $f={h[1]} /><Gap $f={h[2]} /><VArrow aria-label="Scroll right">▸</VArrow></HBar>
    </TabStrip>
  );
}
const Status = styled.footer`
  display: flex;
  align-items: center;
  flex: none;
  height: 8px;
  padding-left: 2px;
  background: #ececec;
  border-bottom: 1px solid ${(p) => (p.$tint ? "#cdf0d8" : "#e0e0e0")};
  gap: 4px;
`;
const ViewBtn = styled.button`
  width: 9px;
  height: 7px;
  display: grid;
  place-items: center;
  background: ${(p) => (p.$on ? "#c2c2c2" : "none")};
`;
const Zoom = styled.input`
  appearance: none;
  width: 30px;
  height: 1px;
  background: #777;
  &::-webkit-slider-thumb { appearance: none; width: 1px; height: 4px; background: #444; }
`;
const Water = styled.span`
  position: relative;
  width: 14px;
  padding-right: 2px;
  text-align: right;
  &::before { content: "filmora"; position: absolute; right: 3px; top: -5px; font-size: 6px; color: #bdbdbd; }
`;
function StatusBar({ text, tint, stats, zoom = "100%" }) {
  return (
    <Status $tint={tint}>
      <span>{text || "Ready"}</span>
      {!text && <><Icon k="access" s={4} /><span>Accessibility: Investigate</span></>}
      <Push $gap={0}>{stats}</Push>
      <ViewBtn $on aria-label="Normal view"><Icon k="cell" s={5} /></ViewBtn><ViewBtn aria-label="Page layout"><Icon k="doc" s={5} /></ViewBtn><ViewBtn aria-label="Page break"><Icon k="fmt" s={5} /></ViewBtn>
      <Zoom type="range" aria-label="Zoom" defaultValue={50} />
      <Water>{zoom}</Water>
    </Status>
  );
}

/* ---------- objects floating on a worksheet ---------- */
const Obj = styled.div`
  position: absolute;
  left: ${(p) => p.$x}px;
  top: ${(p) => p.$y}px;
  ${(p) => p.$w && css`width: ${p.$w}px;`}
  ${(p) => p.$h && css`height: ${p.$h}px;`}
`;
const Paper = styled(Obj)`background: #fff; box-shadow: 0 0 2px #aaa;`;
const Text = styled(Obj)`
  font-family: Lato, "Open Sans", sans-serif;
  font-size: ${(p) => p.$s}px;
  line-height: 12px;
  font-weight: ${(p) => (p.$thin ? 400 : 900)};
  color: ${(p) => (p.$thin ? "#444" : "#141c2b")};
`;
const Rule = styled(Obj)`
  height: 1px;
  background: linear-gradient(${(p) => (p.$rev ? 270 : 90)}deg, ${(p) => p.$from || "#222"}, ${(p) => p.$to || "rgba(160,160,160,0)"});
`;
const VRule = styled(Obj)`
  width: 1px;
  background: linear-gradient(180deg, ${(p) => p.$from || "#aaa"}, ${(p) => p.$to || "#444"});
`;
const Brand = styled(Obj)`
  display: flex;
  align-items: center;
  gap: ${(p) => (p.$small ? 4 : 5)}px;
  height: 16px;
  font: 700 ${(p) => (p.$small ? 11 : 13)}px/16px Lato, "Open Sans", sans-serif;
  color: #141c2b;
`;
const Ball = ({ s }) => (
  <Svg $s={s} viewBox="0 0 32 32">
    <circle cx="16" cy="16" r="15" fill="#f4f4f6" stroke="#555a66" strokeWidth="1" />
    <path d="M1 16a15 15 0 0130 0z" fill="#cf3f50" />
    <path d="M4 23a14 14 0 0024 0c-6 5-18 5-24 0z" fill="#c9cbd2" />
    <path d="M1 14h30v3H1z" fill="#4a3f48" />
    <circle cx="16" cy="15" r="6" fill="#4a5568" />
    <circle cx="16" cy="15" r="3" fill="#e8edf5" />
  </Svg>
);
const Logo = ({ x, y, small }) => <Brand $x={x} $y={y} $small={small}><Ball s={small ? 14 : 16} />Game Sale Dashboard</Brand>;
const Pad = ({ x, y }) => (
  <Obj $x={x} $y={y}><Svg $s={10} viewBox="0 0 20 20" fill="none" stroke="#444" strokeWidth="1"><path d="M3 3h14v4H3zM5 9h10l4 9h-4l-3-4H8l-3 4H1zM2 3l-1 5M18 3l1 5M8 9v4M13 11h2" /></Svg></Obj>
);
const Cursor = ({ x, y }) => (
  <Obj $x={x} $y={y}><Svg $s={6} viewBox="0 0 12 12"><path d="M6 0l2 3H4zM6 12L4 9h4zM0 6l3-2v4zM12 6L9 8V4z" fill="#222" /><path d="M6 3v6M3 6h6" stroke="#222" strokeDasharray="1 1" /></Svg></Obj>
);
const Cross = ({ x, y }) => (
  <Obj $x={x} $y={y}><Svg $s={7} viewBox="0 0 14 14"><path d="M7 0v14M0 7h14" stroke="#111" strokeWidth="2" /></Svg></Obj>
);
const SelSvg = styled.svg`position: absolute; left: -3px; top: -3px; overflow: visible;`;
function Selection({ x, y, w, h, spin, solid }) {
  const pts = [[0, 0], [w / 2, 0], [w, 0], [0, h / 2], [w, h / 2], [0, h], [w / 2, h], [w, h]];
  return (
    <Obj $x={x} $y={y}>
      <SelSvg width={w + 6} height={h + 6} viewBox={`-3 -3 ${w + 6} ${h + 6}`} fill="#fff" stroke="#666" strokeWidth="1">
        <rect width={w} height={h} fill="none" strokeDasharray={solid ? "none" : "1 1"} stroke={solid ? "#555" : "#999"} />
        {pts.map(([a, b], i) => <circle key={i} cx={a} cy={b} r="1.5" />)}
        {spin && <g fill="none"><circle cx={w / 2} cy={-spin} r="3" /><path d={`M${w / 2} ${-spin - 2}v4`} /></g>}
      </SelSvg>
    </Obj>
  );
}
const Kpis = ({ small, y, rows, marks }) => (
  <>
    {rows.map(([t, x, v, vx]) => (
      <React.Fragment key={t}>
        <Text $x={x} $y={y} $s={small ? 6 : 7}>{t}</Text>
        <Text $x={vx} $y={y} $s={(small ? 5 : 6) - (v[0] === "P" ? 0 : 1)} $thin>{v}</Text>
      </React.Fragment>
    ))}
    {marks.map(([x, c]) => <VRule key={x} $x={x} $y={y + 1} $h={10} $from={c} $to={c} />)}
  </>
);
const KpisSmall = () => (
  <>
    <Pad x={67} y={34} />
    <Kpis small y={33} marks={[[148, "#333"], [208, "#ccc"], [321, "#333"]]} rows={[
      ["Top Publisher:", 78, "PlayStation", 119], ["Top Game:", 152, "Wii Sports", 185], ["Total Sales:", 211, "$8,820.36", 245],
      ["Highest Sale:", 269, "$82.74", 306], ["Lowest Sale:", 325, "$0.01", 361], ["Avg. Sale:", 376, "$0.54", 405]]} />
  </>
);

/* ---------- charts ---------- */
const Plot = styled.svg`
  position: absolute;
  inset: 0;
  width: 100%;
  height: 100%;
  font-family: Roboto, sans-serif;
  font-size: 4px;
  fill: #555;
`;
const KX = 600 / 1568;
const KY = 1 / 3;
const px = (v) => Math.round(v * KX * 10) / 10;
const py = (v) => Math.round(v * KY * 10) / 10;
/* Smooth path through the data points. */
function smooth(pts) {
  const p = pts.map(([a, b]) => [px(a), py(b)]);
  let d = `M${p[0]}`;
  for (let i = 0; i < p.length - 1; i++) {
    const a = p[i - 1] || p[i], b = p[i], c = p[i + 1], e = p[i + 2] || c;
    d += `C${b[0] + (c[0] - a[0]) / 6} ${b[1] + (c[1] - a[1]) / 6} ${c[0] - (e[0] - b[0]) / 6} ${c[1] - (e[1] - b[1]) / 6} ${c[0]} ${c[1]}`;
  }
  return d;
}
function Bars({ id, x0, names, ys, ends, h, ticks, tickY, tickSize = 3 }) {
  return (
    <g>
      <defs><linearGradient id={id}><stop offset="0" stopColor="#1a2336" /><stop offset="1" stopColor="#263f5b" /></linearGradient></defs>
      <path d={`M${px(x0)} ${py(ys[0] - 20)}V${py(ys[ys.length - 1] + 20)}`} stroke="#ccc" strokeWidth="1" />
      {ys.map((y, i) => (
        <g key={i}>
          <rect x={px(x0)} y={py(y - h / 2)} width={px(ends[i] - x0)} height={py(h)} fill={`url(#${id})`} />
          <text x={px(x0 - 8)} y={py(y) + 1} textAnchor="end">{names[i]}</text>
        </g>
      ))}
      {ticks && ["$0.00", "$500.00", "$1,000.00", "$1,500.00", "$2,000.00"].map((t, i) => <text key={t} x={px(ticks[i])} y={py(tickY) + 1} fontSize={tickSize} textAnchor="middle">{t}</text>)}
    </g>
  );
}
const YLabels = ({ x, ys, from, step }) => ys.map((y, i) => {
  const v = from - step * i;
  return <text key={y} x={px(x)} y={py(y) + 1} textAnchor="end">{(v < 0 ? "-$" : "$") + Math.abs(v).toLocaleString("en-US") + ".00"}</text>;
});
const genres7 = ["Adventure", "Puzzle", "Fighting", "Platform", "Role-Playing", "Shooter", "Action"];
const genres12 = ["Strategy", "Adventure", "Puzzle", "Simulation", "Fighting", "Racing", "Misc", "Platform", "Role-Playing", "Shooter", "Sports", "Action"];

/* ---------- worksheet tables ---------- */
const CW = [20, 34, 42, 20, 20, 20, 34, 42, 20, 34, 42, ...Array(13).fill(20)];
const rowTpl = "minmax(0,10fr) minmax(0,19fr) repeat(7, minmax(0,12fr)) repeat(27, minmax(0,10fr))";
const CellGrid = styled.div`
  display: grid;
  height: 100%;
  grid-template-columns: ${CW.map((w) => w + "px").join(" ")};
  grid-template-rows: ${rowTpl};
`;
const RowLine = styled.i`grid-column: 1 / -1; grid-row: ${(p) => p.$n}; border-bottom: 1px solid ${(p) => (p.$strong ? "#d3d3d3" : "#f6f6f6")};`;
const ColLine = styled.i`grid-row: 1 / -1; grid-column: ${(p) => p.$n}; border-right: 1px solid ${(p) => (p.$strong ? "#d3d3d3" : "#f3f3f3")};`;
const DataTable = styled.table`
  display: grid;
  grid-template-columns: subgrid;
  grid-template-rows: subgrid;
  grid-area: ${(p) => p.$area};
  background: #fff;
  thead, tbody, tr { display: contents; }
  th, td { display: flex; align-items: center; justify-content: center; min-width: 0; min-height: 0; padding: 0; font-size: 4px; color: #222; }
  td { font-weight: 500; }
`;
const PivotTable = styled(DataTable)`
  th, tr:last-child td { background: #d9e1f2; font-weight: 700; }
`;
const InfoTable = styled(DataTable)`
  thead th { font: 700 7px/8px Lato, sans-serif; color: #fff; background: #3a3636; overflow: hidden; }
  thead th:first-child { background: #44546a; font-size: 6px; }
  tbody th { font: 700 5px/6px Lato, sans-serif; background: #dcdcdc; border-right: 1px solid #555; clip-path: inset(0 0 0 -20px); }
  tbody td { font: 400 5px/6px Lato, sans-serif; }
  tbody tr:nth-child(even) td { border-bottom: 1px solid #777; }
`;
const years = [["1989", "$73.45"], ["1984", "$50.36"], ["1990", "$49.39"], ["1988", "$47.22"], ["1981", "$35.77"], ["1991", "$32.23"], ["1982", "$28.86"], ["1987", "$21.74"], ["1983", "$16.79"], ["Grand Total", "$355.81"]];
const plats = [["X360", "$969.31"], ["DS", "$818.96"], ["GBA", "$313.56"], ["GB", "$254.42"], ["XB", "$252.09"], ["N64", "$218.21"], ["GC", "$197.14"], ["GEN", "$28.36"], ["WS", "$1.42"], ["GG", "$0.04"], ["Grand Total", "$3,053.51"]];
const gens = [["Action", "$1,722.88"], ["Shooter", "$1,026.20"], ["Role-Playing", "$923.84"], ["Platform", "$829.15"], ["Fighting", "$444.05"], ["Puzzle", "$242.02"], ["Adventure", "$234.80"], ["Grand Total", "$422.94"]];
const info = [["Total Games", "16,598"], ["Total Sales", "$8,820.36"], ["Average Sale Value", "$0.54"], ["Max Sale Value", "$82.74"], ["Min Sale Value", "$0.01"], ["Highest Sale Game", "Wii Sports"], ["Lowest Sale Game", "Turok"]];
const Pivot = ({ area, data }) => (
  <PivotTable $area={area}>
    <thead><tr><th>Row Labels ⊽</th><th>Sum of Global_Sales</th></tr></thead>
    <tbody>{data.map(([a, b]) => <tr key={a}><td>{a}</td><td>{b}</td></tr>)}</tbody>
  </PivotTable>
);
const Cells = () => (
  <CellGrid>
    {Array.from({ length: 36 }, (_, i) => <RowLine key={"r" + i} $n={i + 1} $strong={[2, 4, 6, 8, 15, 19, 23, 27, 28, 31, 32, 35].includes(i + 1)} />)}
    {CW.map((_, i) => <ColLine key={"c" + i} $n={i + 1} $strong={[1, 6, 9].includes(i)} />)}
    <InfoTable $area="2 / 2 / 10 / 4">
      <thead><tr><th>Information</th><th>Value</th></tr></thead>
      <tbody>{info.map(([a, b]) => <tr key={a}><th scope="row">{a}</th><td>{b}</td></tr>)}</tbody>
    </InfoTable>
    <Pivot area="12 / 2 / 21 / 4" data={gens} />
    <Pivot area="2 / 7 / 13 / 9" data={years} />
    <Pivot area="2 / 10 / 14 / 12" data={plats} />
  </CellGrid>
);

/* ---------- task panes ---------- */
const Pane = styled.aside`
  display: flex;
  flex-direction: column;
  flex: none;
  width: ${(p) => p.$w}px;
  padding: 4px 4px 0 5px;
  overflow: hidden;
  background: #e6e6e6;
`;
const PaneTitle = styled.h3`
  display: flex;
  align-items: center;
  flex: none;
  margin: 0;
  height: 8px;
  font: 400 6px/8px "Open Sans", sans-serif;
  color: #3c7a58;
  span { margin-left: auto; font-size: 4px; color: #666; }
  span + span { margin-left: 10px; }
`;
const Line = styled.div`
  display: flex;
  align-items: center;
  flex: none;
  height: ${(p) => p.$h || 8}px;
  gap: ${(p) => p.$gap || 0}px;
  padding-left: ${(p) => p.$pad || 0}px;
  color: ${(p) => (p.$dim ? "#a0a0a0" : p.$green ? green : ink)};
  font-weight: ${(p) => (p.$green ? 700 : 400)};
`;
const White = styled.div`
  background: #fff;
  flex: none;
  height: ${(p) => p.$h}px;
  padding: 1px;
`;
const Search = styled.label`
  display: flex;
  align-items: center;
  flex: none;
  background: #fff;
  height: 7px;
  padding-right: 1px;
  input { flex: 1; padding-left: 1px; }
`;
const Tick = styled.label`
  display: flex;
  align-items: center;
  gap: 2px;
  height: ${(p) => p.$h || 6}px;
  flex: none;
  padding-left: ${(p) => p.$pad || 0}px;
  input { appearance: none; width: 4px; height: 4px; border: 1px solid #999; background: #fff; border-radius: ${(p) => (p.$round ? "50%" : "0")}; }
  input:checked { background: #555; }
  svg { margin-left: auto; }
`;
const Areas = styled.div`
  display: grid;
  grid-template-columns: 1fr 1fr;
  column-gap: 4px;
  flex: none;
`;
const DropBtn = styled.button`
  margin-left: auto;
  width: 13px;
  height: 7px;
  display: flex;
  align-items: center;
  justify-content: center;
  gap: 1px;
  background: #fff;
  border: 1px solid #cfcfcf;
`;
const SpinField = styled(Field)`
  margin-left: auto;
  border-color: #d0d0d0;
  width: 23px;
`;
const Track = styled.input`
  appearance: none;
  width: ${(p) => p.$w || 18}px;
  height: 1px;
  background: #aaa;
  margin-left: auto;
  &::-webkit-slider-thumb { appearance: none; width: 1px; height: 4px; background: #777; }
  & + input { margin-left: 1px; }
`;
const IconTab = styled.button`
  width: 10px;
  height: 9px;
  display: grid;
  place-items: center;
  background: ${(p) => (p.$on ? "#a9bfb2" : "none")};
`;
const CapPick = styled(Pick)`margin-left: auto;`;
const FieldsPane = () => (
  <Pane $w={110}>
    <PaneTitle>PivotChart Fields<span>▾</span><span>✕</span></PaneTitle>
    <Line $h={15}>Choose fields to add to report:<DropBtn><Icon k="gear" s={4} />▾</DropBtn></Line>
    <Search><input placeholder="Search" aria-label="Search fields" /><Icon k="find" s={5} /></Search>
    <Line $h={4} />
    <White $h={89}>
      {["Name", "Platform", "Year", "Genre", "Publisher", "NA_Sales", "EU_Sales", "JP_Sales", "Other_Sales", "Global_Sales"].map((t) => (
        <Tick key={t}><input type="checkbox" defaultChecked={t === "Genre" || t === "Global_Sales"} />{t}{t === "Genre" && <Icon k="funnel" s={4} />}</Tick>
      ))}
    </White>
    <Line $h={16}>Drag fields between areas below:</Line>
    <Areas>
      <Line $h={7}>▽ Filters</Line><Line $h={7}>▥ Legend (Series)</Line>
      <White $h={38} /><White $h={38} />
      <Line $h={11}>☰ Axis (Categories)</Line><Line $h={11}>Σ Values</Line>
      <White $h={39}>Genre</White><White $h={39}>Sum of Global_Sales</White>
    </Areas>
    <Line $h={15}><Tick><input type="checkbox" />Defer Layout Update</Tick><DropBtn>Update</DropBtn></Line>
  </Pane>
);
const ShapePane = () => (
  <Pane $w={90}>
    <PaneTitle>Format Shape<span>▾</span><span>✕</span></PaneTitle>
    <Line $h={11} $gap={6} $pad={2}><span>Shape Options</span><span>Text Options</span></Line>
    <Line $h={10} $gap={3}><IconTab aria-label="Fill"><Icon k="bucket" s={7} /></IconTab><IconTab $on aria-label="Effects"><Icon k="pent" s={7} /></IconTab><IconTab aria-label="Size"><Icon k="sizep" s={7} /></IconTab></Line>
    <Line $h={4} />
    <Line $h={8} $green $pad={3}>◢ Shadow</Line>
    <Line $pad={6}>Presets<DropBtn><Icon k="box" s={4} />▾</DropBtn></Line>
    <Line $h={12} $pad={6}>Color<DropBtn><Icon k="bucket" s={4} />▾</DropBtn></Line>
    {["Transparency", "Size", "Blur", "Angle", "Distance"].map((t) => <Line as="label" key={t} $pad={6}>{t}<Track type="range" defaultValue={0} /><SpinField /></Line>)}
    <Line $h={3} />
    {["Reflection", "Glow", "Soft Edges", "3-D Format", "3-D Rotation"].map((t) => <Line key={t} $pad={3}>▹ {t}</Line>)}
  </Pane>
);
const ChartPane = () => (
  <Pane $w={90}>
    <PaneTitle>Format Chart Area<span>▾</span><span>✕</span></PaneTitle>
    <Line $h={11} $gap={6} $pad={2}><span>Chart Options ▾</span><span>Text Options</span></Line>
    <Line $h={10} $gap={3}><IconTab $on aria-label="Fill"><Icon k="bucket" s={7} /></IconTab><IconTab aria-label="Effects"><Icon k="pent" s={7} /></IconTab><IconTab aria-label="Size"><Icon k="sizep" s={7} /></IconTab></Line>
    <Line $h={4} />
    <Line $h={9} $green $pad={3}>◢ Fill</Line>
    {["No fill", "Solid fill", "Gradient fill", "Picture or texture fill", "Pattern fill", "Automatic"].map((t) => <Tick key={t} $round $h={7} $pad={9}><input type="radio" name="fill" defaultChecked={t === "Automatic"} />{t}</Tick>)}
    <Line $h={14} $pad={9}>Color<DropBtn><Icon k="bucket" s={4} />▾</DropBtn></Line>
    <Line $h={10} $green $pad={3}>◢ Border</Line>
    {["No line", "Solid line", "Gradient line", "Automatic"].map((t) => <Tick key={t} $round $h={7} $pad={9}><input type="radio" name="border" defaultChecked={t === "Automatic"} />{t}</Tick>)}
    <Line $h={14} $pad={9}>Color<DropBtn><Icon k="pen" s={4} />▾</DropBtn></Line>
    <Line as="label" $h={8} $pad={9}>Transparency<Track $w={12} type="range" defaultValue={0} /><SpinField defaultValue="0%" /></Line>
    <Line as="label" $h={9} $pad={9}>Width<SpinField defaultValue="0.75 pt" /></Line>
    {["Compound type", "Dash type"].map((t) => <Line key={t} $h={10} $pad={9}>{t}<DropBtn><Icon k="lines" s={4} />▾</DropBtn></Line>)}
    {[["Cap type", "Flat"], ["Join type", "Round"]].map(([t, v]) => <Line as="label" key={t} $h={9} $pad={9}>{t}<CapPick $w={20}><option>{v}</option></CapPick></Line>)}
    {["Begin Arrow type", "Begin Arrow size", "End Arrow type", "End Arrow size"].map((t) => <Line key={t} $h={10} $pad={9} $dim>{t}<DropBtn><Icon k="lines" s={4} dim />▾</DropBtn></Line>)}
  </Pane>
);
const SlicerPane = () => (
  <Pane $w={90}>
    <PaneTitle>Format Slicer<span>▾</span><span>✕</span></PaneTitle>
    <Line $h={14}><IconTab $on aria-label="Size and properties"><Icon k="sizep" s={7} /></IconTab></Line>
    <Line $h={4} />
    {["Position and Layout", "Size", "Properties"].map((t) => <Line key={t} $pad={3}>▹ {t}</Line>)}
  </Pane>
);

/* ---------- context menu, slicer, caption ---------- */
const ChartBox = styled(Obj)`background: #fff;`;
const GrayTag = styled(Obj)`background: #b9b9b9; border: 1px solid #999; line-height: 4px; padding-left: 1px; overflow: hidden;`;
const Menu = styled(Obj).attrs({ as: "ul" })`
  margin: 0;
  padding: 0;
  list-style: none;
  display: flex;
  flex-direction: column;
  background: #fff;
  border: 1px solid #c4c4c4;
  box-shadow: 1px 1px 2px #bbb;
`;
const MenuItem = styled.li`
  flex: 1;
  display: flex;
  align-items: center;
  padding-left: 2px;
  color: ${(p) => (p.$off ? "#b0b0b0" : "#555")};
  background: ${(p) => (p.$on ? "#c9ecd3" : "none")};
  outline: ${(p) => (p.$on ? "1px solid #9fd3ae" : "0")};
  span { width: 8px; }
`;
const Caption = styled(Obj)`
  height: 16px;
  padding: 0 3px 0 0;
  background: rgba(222, 222, 222, 0.92);
  color: #858585;
  font: 700 10px/15px Lato, "Open Sans", sans-serif;
`;
const SlicerBox = styled(Obj)`
  display: flex;
  gap: 2px;
  padding: 2px 2px 0;
  background: #fff;
  border: 1px solid #777;
  overflow: hidden;
`;
const SlicerList = styled.div`display: flex; flex-direction: column; gap: 1px; flex: 1;`;
const SlicerItem = styled.button`
  flex: none;
  height: 7px;
  padding-left: 3px;
  text-align: left;
  background: #dadada;
  border: 1px solid #b0b0b0;
  line-height: 4px;
`;
const SlicerScroll = styled.span`width: 4px; background: linear-gradient(#e6e6e6 3px, #c4c4c4 3px 44px, #ececec 44px);`;
const BlueFill = styled(Obj)`background: #8ea5d3;`;
const ActiveCell = styled(Obj)`border: 1px solid #4f78bb;`;
const SideBtn = styled.button`width: 8px; height: 8px; background: #fff; border: 1px solid #bbb; display: grid; place-items: center;`;

function Frame({ active, ctx, early, ribbon, name, formula = "", edit, status, children, pane, tabs }) {
  return (
    <Window>
      <TitleBar active={active} ctx={ctx} early={early} />
      <Ribbon>{ribbon}</Ribbon>
      <FormulaBar>
        <NameBox defaultValue={name} aria-label="Name box" />
        <FxBox $on={edit}><span>✕</span><span>✓</span><i>fx</i></FxBox>
        <Formula defaultValue={formula} aria-label="Formula bar" />
      </FormulaBar>
      <Work>
        <Left>{children}<Tabs {...tabs} /></Left>
        {pane}
      </Work>
      <StatusBar {...status} />
    </Window>
  );
}

const drawCtx = [{ name: "Drawing Tools", tabs: [["Shape Format", 31]] }];
const pivotCtx = [{ name: "PivotChart Tools", tabs: [["PivotChart Analyze", 39], ["Design", 21], ["Format", 19]] }];
const slicerCtx = [{ name: "Slicer Tools", tabs: [["Slicer", 22]] }];
const smallTabs = { hw: 198, h: [0, 96, 4] };
const yearTicks = Array.from({ length: 38 }, (_, i) => 1980 + i);

export default function App() {
  return (
    <>
      <Global />
      <Wall>
        <Frame active="Insert" ribbon={<InsertRibbon />} name="E6" status={{ text: "Click and drag to move or AutoFill cells", tint: true }}>
          <Sheet row0={5} bar={[16, 212, 4]} selCol="E" selRow={6}>
            <BlueFill $x={40} $y={0} $w={520} $h={260} />
            <ActiveCell $x={80} $y={6} $w={21} $h={7} />
            <Cross x={556} y={236} />
          </Sheet>
        </Frame>

        <Frame active="Shape Format" ctx={[...drawCtx, { name: "Picture Tools", tabs: [["Picture Format", 33]] }]} ribbon={<ShapeRibbon />} name="Group 4" status={{ tint: true }}>
          <Sheet bar={[0, 192, 40]}>
            <Paper $x={41} $y={7} $w={499} $h={260} />
            <Logo x={223} y={14} />
            <Cursor x={308} y={7} />
          </Sheet>
        </Frame>

        <Frame active="Shape Format" ctx={drawCtx} ribbon={<ShapeRibbon line />} name="Straight C..." status={{ tint: true }}>
          <Sheet bar={[0, 192, 40]}>
            <Paper $x={41} $y={7} $w={499} $h={260} />
            <Logo x={223} y={14} />
            <Rule $x={256} $y={33} $w={111} />
            <Pad x={79} y={41} />
            <Kpis y={40} marks={[]} rows={[["Top Publisher:", 92, "PlayStation", 141]]} />
            <Selection x={194} y={40} w={0} h={11} />
            <Cursor x={192} y={43} />
          </Sheet>
        </Frame>

        <Frame active="Home" ribbon={<HomeRibbon off font="Century Gothic" size="12" />} name="A1" formula="'Game Sales'!" edit status={{ tint: true }} tabs={{ on: ["Game Sales", "Dashboard"] }}>
          <Sheet rows={36} colW={CW} rowTpl={rowTpl} bg="#fff" bar={[0, 228, 6]}>
            <Cells />
            <Cursor x={116} y={177} />
          </Sheet>
        </Frame>

        <Frame active="PivotChart Analyze" ctx={pivotCtx} early ribbon={<AnalyzeRibbon />} name="Chart 1" pane={<FieldsPane />}
          status={{ tint: true, stats: "Average: $746.85267   Count: 14   Sum: $422.94" }} tabs={{ on: ["Game Sales"], hw: 190, h: [0, 92, 8] }}>
          <Sheet rows={36} colW={CW.slice(0, 18)} rowTpl={rowTpl} bg="#fff" bar={[0, 228, 6]}>
            <Cells />
            <ChartBox $x={153} $y={68} $w={150} $h={89} />
            <GrayTag $x={155} $y={70} $w={33} $h={6}>Sum of Global_Sales</GrayTag>
            <GrayTag $x={155} $y={113} $w={18} $h={6}>Genre ▾</GrayTag>
            <Plot>
              <rect x="246" y="142" width="16" height="3" fill="#4a67ad" />
              <rect x="286" y="121" width="2" height="2" fill="#4a67ad" />
              <text x="289" y="123">Total</text>
              <text x="247" y="153" fontSize="3">$1,500.00 $2,000.00</text>
              <path d="M254 90v55M272 90v55" stroke="#eee" />
            </Plot>
            <Selection x={153} y={68} w={150} h={89} solid />
            <Obj $x={306} $y={67}><SideBtn aria-label="Chart elements">+</SideBtn></Obj>
            <Obj $x={306} $y={78}><SideBtn aria-label="Chart styles"><Icon k="pen" s={5} /></SideBtn></Obj>
            <Menu $x={174} $y={70} $w={73} $h={89}>
              {[["Move Up", 1], ["Move Down", 1], ["Move to Beginning", 1], ["Move to End", 1], ["Move to Report Filter", 0, "▽"], ["Move to Axis Fields (Categories)", 0, "▥"], ["Move to Legend Fields (Series)", 0, "☰"], ["Move to Values", 1, "Σ"], ["Hide Value Field Buttons on Chart", 0], ["Hide All Field Buttons on Chart", 0], ["Remove Field", 0, "✕"], ["Value Field Settings...", 0, "▤"]].map(([t, off, ic]) => (
                <MenuItem key={t} $off={off} $on={t === "Move to Report Filter"}><span>{ic}</span>{t}</MenuItem>
              ))}
            </Menu>
            <Caption $x={11} $y={221}>Style your chart based on your preference but make sure you choose the right chart type</Caption>
          </Sheet>
        </Frame>

        <Frame active="Home" ctx={drawCtx} ribbon={<HomeRibbon />} name="TextBox 22" pane={<ShapePane />} status={{ tint: true, zoom: "85%" }} tabs={smallTabs}>
          <Sheet small rows={45} bar={[0, 230, 2]}>
            <Paper $x={35} $y={6} $w={420} $h={224} />
            <Logo x={188} y={10} small />
            <Rule $x={216} $y={28} $w={96} $from="#555" $to="#888" />
            <KpisSmall />
            <Rule $x={216} $y={50} $w={96} $rev />
            <Text $x={71} $y={95} $s={8}>Game Sale Genre</Text>
            <Selection x={69} y={96} w={69} h={10} spin={11} />
            <Cursor x={170} y={99} />
            <Plot><g transform="translate(-7 -81)">
              <Bars id="g6" x0={201} names={genres7} ys={[594, 638, 681, 725, 769, 813, 856]} ends={[222, 222, 240, 272, 280, 290, 349]} h={30} ticks={[201, 245, 287, 330, 376]} tickY={890} />
            </g></Plot>
          </Sheet>
        </Frame>

        <Frame active="Home" ctx={drawCtx} ribbon={<HomeRibbon />} name="TextBox 22" status={{}} tabs={{ h: [6, 94, 0] }}>
          <Sheet first={2} row0={4} bar={[10, 137, 87]}>
            <Paper $x={1} $y={-5} $w={499} $h={270} />
            <Logo x={183} y={-4} />
            <Pad x={39} y={22} />
            <Kpis y={22} marks={[[275, "#555"], [342, "#aaa"]]} rows={[
              ["Top Publisher:", 52, "PlayStation", 101], ["Top Game:", 140, "Wii Sports", 180], ["Total Sales:", 210, "$8,820.36", 250],
              ["Highest Sale:", 279, "$82.74", 323], ["Lowest Sale:", 345, "$0.01", 387], ["Avg. Sale:", 406, "$0.54", 441]]} />
            <Rule $x={216} $y={40} $w={116} $from="#000" />
            <Rule $x={263} $y={212} $w={113} $from="#555" $to="#aaa" />
            <VRule $x={154} $y={118} $h={97} $from="#fff" />
            <Text $x={46} $y={95} $s={10}>Game Sale Genre</Text>
            <Selection x={42} y={94} w={82} h={12} spin={11} />
            <Cursor x={103} y={92} />
            <Plot><g transform="translate(-8 -82)">
              <Bars id="g7" x0={132} names={genres7} ys={[604, 656, 707, 758, 810, 861, 913]} ends={[157, 157, 178, 216, 226, 238, 308]} h={34} ticks={[132, 183, 233, 285, 335]} tickY={952} tickSize={4} />
              <YLabels x={494} ys={[604, 632, 660, 689, 717, 745, 774, 802, 830]} from={80} step={10} />
              <path d={smooth([[542, 622], [583, 662], [622, 690], [662, 692], [703, 690], [745, 691], [783, 696], [825, 716], [865, 732], [942, 739], [1022, 748], [1101, 769], [1183, 782]])} fill="none" stroke="#1a1f2a" strokeWidth="1" />
              {["1989", "1984", "1990", "1988", "1981", "1991", "1982", "1987", "1983"].map((t, i) => <text key={t} x={px(542 + 80 * i)} y={282} textAnchor="middle">{t}</text>)}
            </g></Plot>
          </Sheet>
        </Frame>

        <Frame active="Home" ctx={pivotCtx} early ribbon={<HomeRibbon font="Calibri (Body)" size="10" />} name="Chart 40" pane={<ChartPane />} status={{ zoom: "85%" }} tabs={smallTabs}>
          <Sheet small row0={10} rows={45} bar={[31, 163, 40]}>
            <Paper $x={35} $y={-5} $w={421} $h={270} />
            <Rule $x={217} $y={2} $w={95} $from="#000" $to="#bbb" />
            <Rule $x={217} $y={43} $w={95} $rev $from="#777" />
            <Rule $x={255} $y={148} $w={96} $from="#000" />
            <VRule $x={164} $y={72} $h={79} />
            <Text $x={71} $y={48} $s={8}>Game Sale Per Genre</Text>
            <Text $x={267} $y={48} $s={8}>Game Sale Per Year</Text>
            <Plot><g transform="translate(-7 -81)">
              <Bars id="g8" x0={201} names={genres12} ys={[441, 467, 492, 519, 544, 570, 594, 621, 646, 672, 696, 723]} ends={[217, 222, 222, 235, 240, 264, 269, 272, 280, 290, 314, 349]} h={18} ticks={[201, 245, 287, 330, 376]} tickY={747} />
              <YLabels x={512} ys={[450, 474, 496, 519, 542, 565, 588, 610, 633, 656]} from={800} step={100} />
              <path d={smooth([[528, 478], [545, 479], [558, 493], [575, 495], [590, 514], [606, 515], [628, 532], [650, 543], [667, 550], [695, 550], [710, 556], [728, 557], [745, 574], [772, 574], [792, 588], [805, 586], [820, 587], [837, 615], [890, 616], [915, 622], [970, 623], [1000, 625], [1040, 628], [1113, 634]])} fill="none" stroke="#1a1f2a" strokeWidth="1" />
              {yearTicks.map((t, i) => <text key={t} transform={`translate(${px(536 + 15.6 * i)} 215) rotate(-50)`} textAnchor="end">{t}</text>)}
              <rect x={px(468)} y={py(727)} width={px(682)} height="90" fill="none" stroke="#ddd" />
              <YLabels x={512} ys={[738, 770, 803, 834, 867, 899, 932, 960]} from={1400} step={200} />
              <path d={smooth([[530, 766], [548, 805], [555, 811], [575, 811], [590, 817], [612, 833], [628, 840], [637, 870], [648, 910], [655, 918], [672, 917], [705, 922], [785, 922], [830, 931], [855, 932], [885, 949], [905, 950], [945, 958], [980, 961], [1100, 963]])} fill="none" stroke="#1d2b40" strokeWidth="1" />
            </g></Plot>
            <Cursor x={236} y={162} />
          </Sheet>
        </Frame>

        <Frame active="Slicer" ctx={slicerCtx} ribbon={<SlicerRibbon />} name="Genre" pane={<SlicerPane />} status={{ zoom: "85%" }} tabs={smallTabs}>
          <Sheet small rows={45} bar={[0, 161, 72]}>
            <Paper $x={35} $y={6} $w={436} $h={260} />
            <Logo x={188} y={10} small />
            <Rule $x={216} $y={28} $w={96} $from="#555" $to="#888" />
            <KpisSmall />
            <Rule $x={216} $y={50} $w={96} $rev />
            <Rule $x={255} $y={214} $w={96} $from="#555" $to="#999" />
            <VRule $x={164} $y={137} $h={79} />
            <Text $x={104} $y={54} $s={7}>Filters:</Text>
            <Text $x={66} $y={134} $s={8}>Game Sale Per Genre</Text>
            <Text $x={267} $y={114} $s={8}>Game Sale Per Year</Text>
            <Text $x={267} $y={222} $s={8}>Game Sale Per Platform</Text>
            <Plot><g transform="translate(-7 -81)">
              <Bars id="g9" x0={217} names={genres12} ys={[735, 769, 804, 838, 873, 908, 942]} ends={[230, 235, 235, 248, 253, 277, 285]} h={24} />
              <YLabels x={502} ys={[649, 671, 694, 717, 740, 762, 785, 808, 831, 854]} from={800} step={100} />
              <text x={px(507)} y="320" textAnchor="end">$1,400.00</text>
              <path d={smooth([[517, 677], [537, 677], [552, 690], [573, 693], [590, 712], [608, 713], [630, 730], [650, 738], [685, 748], [715, 748], [735, 754], [757, 755], [777, 772], [810, 772], [828, 785], [865, 785], [875, 800], [887, 813], [955, 814], [980, 820], [1055, 821], [1110, 824], [1215, 832]])} fill="none" stroke="#1a1f2a" strokeWidth="1" />
              <g fontSize="3">{yearTicks.map((t, i) => <text key={t} x={px(520 + 18.8 * i)} y="282" textAnchor="middle">{t}</text>)}</g>
            </g></Plot>
            <SlicerBox $x={199} $y={75} $w={50} $h={70}>
              <SlicerList>{["Action", "Adventure", "Fighting", "Misc", "Platform", "Puzzle", "Racing", "Role-Playing", "Shooter"].map((t) => <SlicerItem key={t}>{t}</SlicerItem>)}</SlicerList>
              <SlicerScroll />
            </SlicerBox>
            <Selection x={199} y={75} w={50} h={70} solid />
          </Sheet>
        </Frame>
      </Wall>
    </>
  );
}
